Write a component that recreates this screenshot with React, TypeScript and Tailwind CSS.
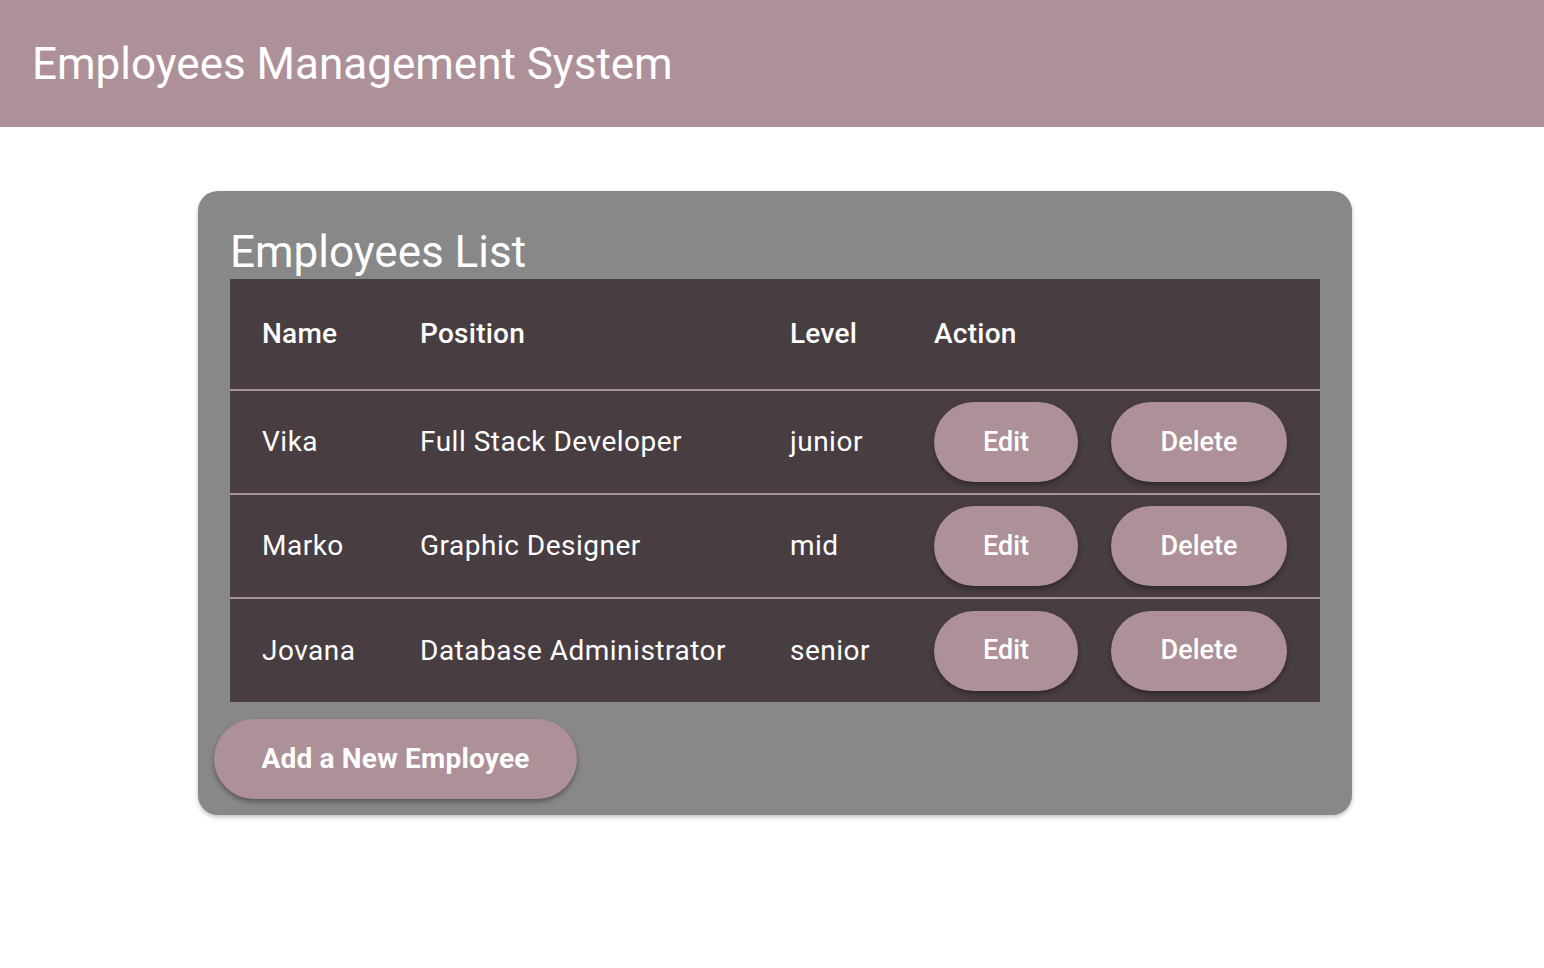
const employees = [
  { name: "Vika", position: "Full Stack Developer", level: "junior" },
  { name: "Marko", position: "Graphic Designer", level: "mid" },
  { name: "Jovana", position: "Database Administrator", level: "senior" },
];

function PillButton({ label, className }: { label: string; className: string }) {
  return (
    <button
      className={`h-[80px] rounded-full bg-[#ae9099] font-medium text-white text-[27px] shadow-[0_3px_5px_rgba(0,0,0,0.35)] ${className}`}
    >
      {label}
    </button>
  );
}

export default function App() {
  return (
    <main className="min-h-screen bg-white font-['Roboto',sans-serif]">
      <header className="flex h-[127px] items-center bg-[#ae9099] px-8">
        <h1 className="text-[44px] text-white">Employees Management System</h1>
      </header>

      <section className="ml-[198px] mt-[64px] w-[1154px] rounded-[20px] bg-[#888888] px-8 pb-4 pt-[34px] shadow-[0_2px_4px_rgba(0,0,0,0.25)]">
        <h2 className="text-[44px] leading-[54px] text-white">Employees List</h2>

        <table className="w-full table-fixed border-collapse bg-[#483e42] text-[28px] text-white">
          <thead>
            <tr className="h-[111px] text-left tracking-[0.25px]">
              <th className="w-[158px] pl-8 font-medium">Name</th>
              <th className="w-[370px] pl-8 font-medium">Position</th>
              <th className="w-[144px] pl-8 font-medium">Level</th>
              <th className="pl-8 font-medium">Action</th>
            </tr>
          </thead>
          <tbody>
            {employees.map((e) => (
              <tr key={e.name} className="h-[104px] border-t-2 border-[#a89499] tracking-[0.5px]">
                <td className="pl-8">{e.name}</td>
                <td className="pl-8">{e.position}</td>
                <td className="pl-8">{e.level}</td>
                <td className="pl-8 pr-8">
                  <div className="flex gap-[33px] tracking-normal">
                    <PillButton label="Edit" className="w-[144px]" />
                    <PillButton label="Delete" className="w-[176px]" />
                  </div>
                </td>
              </tr>
            ))}
          </tbody>
        </table>

        <div className="-ml-4 mt-[17px]">
          <button className="h-[80px] w-[363px] rounded-full bg-[#ae9099] text-[28px] font-bold tracking-[0.2px] text-white shadow-[0_3px_5px_rgba(0,0,0,0.35)]">
            Add a New Employee
          </button>
        </div>
      </section>
    </main>
  );
}
